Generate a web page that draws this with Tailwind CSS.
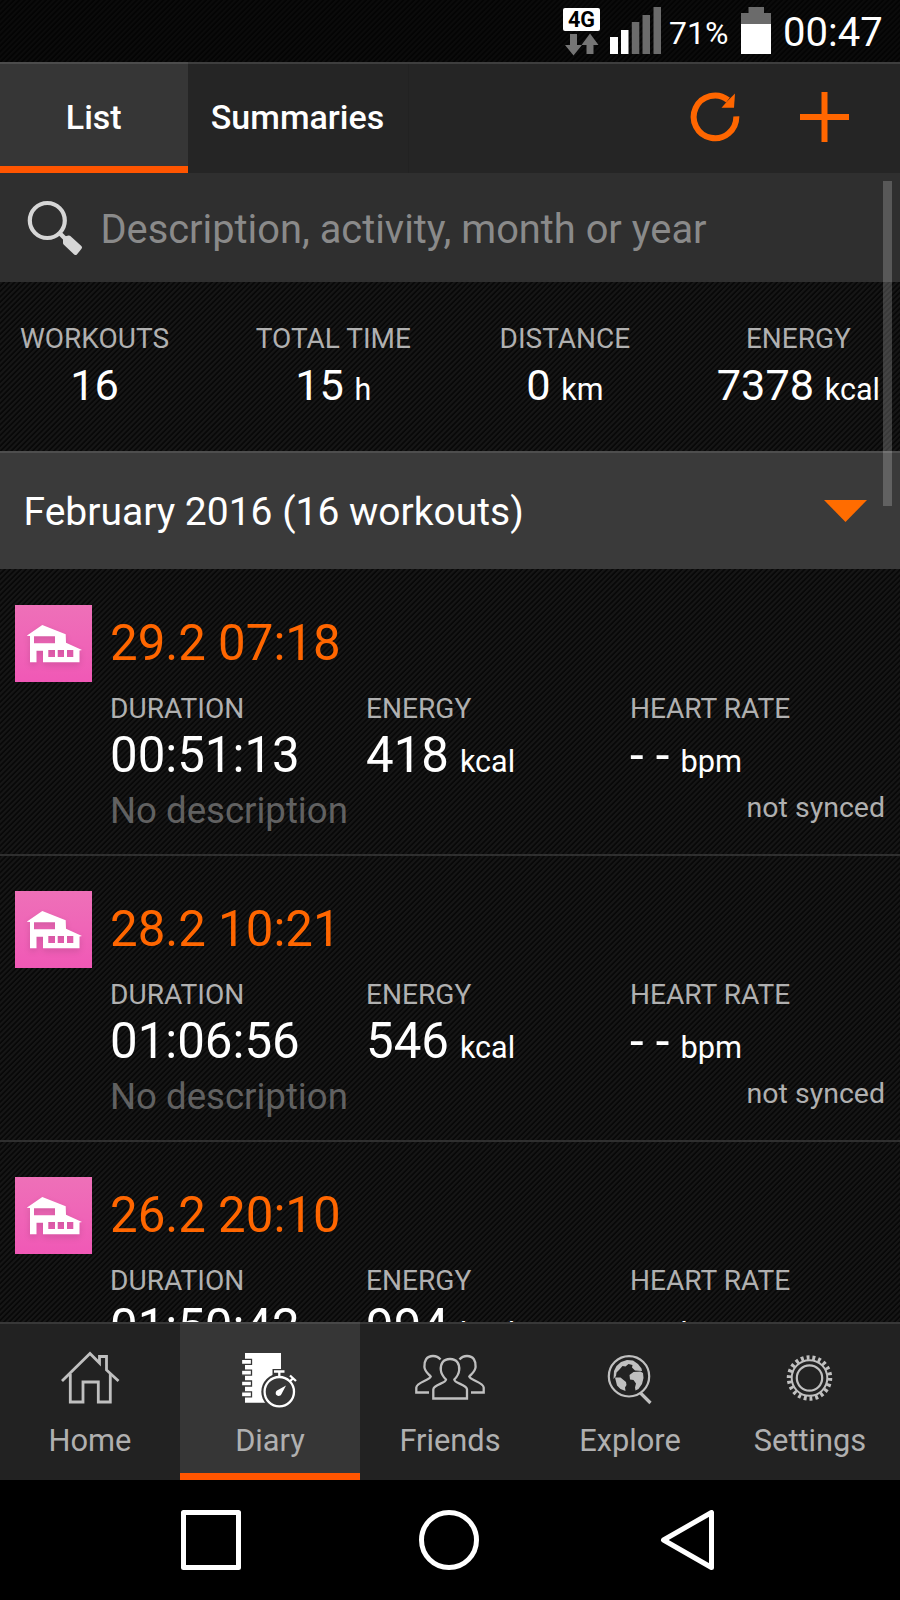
<!DOCTYPE html>
<html lang="en">
<head>
  <meta charset="UTF-8">
  <title>Diary</title>
  <script src="https://cdn.jsdelivr.net/npm/@tailwindcss/browser@4"></script>
</head>
<body class="bg-black">
  <div class="relative w-[900px] h-[1600px] overflow-hidden flex flex-col font-[Roboto,sans-serif] text-white whitespace-nowrap bg-[#0e0e0e] bg-[repeating-linear-gradient(135deg,#161616_0px,#161616_1.2px,#080808_2.2px,#080808_3.1px,#161616_3.77px)]">

    <!-- status bar -->
    <div class="h-[62px] shrink-0 flex bg-black/50 pl-[563px]">
      <svg class="w-[100px] h-[62px] shrink-0" viewBox="0 0 100 62">
        <rect x="0" y="8" width="37" height="23" rx="2" fill="#fff"/>
        <text x="18.5" y="27" text-anchor="middle" font-family="Roboto" font-weight="700" font-size="21.5" fill="#000">4G</text>
        <path d="M7 34h7v11h5l-8.500 10.500L2 45h5zM23.500 54V45h-5L27 33.500 35.500 45h-5v9z" fill="#757575"/>
        <path d="M47 37h8v17h-8zM58 30h7.500v24H58z" fill="#fff"/>
        <path d="M68.800 22h7.500v32h-7.500zM79.500 15h7.500v39h-7.500zM90.500 7h7.500v47h-7.500z" fill="#6b6b6b"/>
      </svg>
      <span class="ml-[6px] w-[62px] mt-[13px] text-[32px] leading-10">71%</span>
      <svg class="ml-[10px] w-[30px] h-[62px] shrink-0" viewBox="0 0 30 62">
        <path d="M0 24V13h7.500V7H23v6h7v11z" fill="#6b6b6b"/>
        <path d="M0 24h30v30H0z" fill="#fff"/>
      </svg>
      <span class="ml-[12px] mt-[8px] text-[40px] leading-[50px]">00:47</span>
    </div>

    <!-- top tabs -->
    <div class="h-[111px] shrink-0 flex bg-[#252525] border-t-2 border-[#3e3e3e] text-[34px] font-medium">
      <div class="w-[187.5px] -mt-[2px] border-t-2 border-t-[#4c4c4c] border-b-[7px] border-b-[#ff5500] bg-[#363636] flex items-center justify-center pt-[5px]">List</div>
      <div class="w-[221px] flex items-center justify-center border-r border-[#222222] pb-[2px]">Summaries</div>
      <svg class="ml-[281.5px] mt-[28px] size-[50px]" viewBox="0 0 50 50">
        <path d="M46.300 24.300A21.300 21.300 0 1 1 38 8" fill="none" stroke="#ff6600" stroke-width="6"/>
        <path d="M45 1.500 44 15.700H31.500L37 9.500z" fill="#ff6600"/>
      </svg>
      <svg class="ml-[60px] mt-[28px] size-[50px]" viewBox="0 0 50 50">
        <path d="M24.500 0v50M0 25h49" stroke="#ff6600" stroke-width="6"/>
      </svg>
    </div>

    <!-- search -->
    <div class="h-[109px] shrink-0 flex items-center bg-[#2f2f2f] pl-[27px]">
      <svg class="w-[58px] h-[58px]" viewBox="0 0 58 58">
        <circle cx="20.300" cy="21.500" r="17.500" fill="none" stroke="#d6d6d6" stroke-width="4.200"/>
        <path d="M31.500 33l8 8" stroke="#d6d6d6" stroke-width="4.500"/>
        <path d="M42 38.500 53 48.500 48.500 54 38 44V39.500z" fill="#d6d6d6" stroke="#d6d6d6" stroke-width="4" stroke-linejoin="round"/>
      </svg>
      <span class="ml-[15.5px] pt-[5px] text-[39.8px] text-[#8a8a8a]">Description, activity, month or year</span>
    </div>

    <!-- totals -->
    <div class="h-[169px] shrink-0 flex justify-between px-5 pt-10 text-center">
      <div>
        <div class="text-[28px] leading-[34px] text-[#b0b0b0]">WORKOUTS</div>
        <div class="mt-[5px] text-[43.3px] leading-[50px]">16</div>
      </div>
      <div>
        <div class="text-[28px] leading-[34px] text-[#b0b0b0]">TOTAL TIME</div>
        <div class="mt-[5px] text-[43.3px] leading-[50px]">15 <span class="text-[30.5px]">h</span></div>
      </div>
      <div class="pl-[2px]">
        <div class="text-[28px] leading-[34px] text-[#b0b0b0]">DISTANCE</div>
        <div class="mt-[5px] text-[43.3px] leading-[50px]">0 <span class="text-[30.5px]">km</span></div>
      </div>
      <div>
        <div class="text-[28px] leading-[34px] text-[#b0b0b0]">ENERGY</div>
        <div class="mt-[5px] text-[43.3px] leading-[50px]">7378 <span class="text-[30.5px]">kcal</span></div>
      </div>
    </div>

    <!-- month header -->
    <div class="h-[118px] shrink-0 flex items-center justify-between bg-[#3a3a3a] border-t-2 border-[#4e4e4e] pl-[23.5px] pr-[33px] text-[39px]">
      <span class="pt-[2px]">February 2016 (16 workouts)</span>
      <svg class="w-[43px] h-[22px]" viewBox="0 0 43 22"><path d="M0 0h43L21.500 22z" fill="#ff6c00"/></svg>
    </div>

    <!-- workouts -->
    <div id="workouts" class="flex-1 min-h-0 overflow-hidden pt-px"></div>

    <!-- app tabs -->
    <div class="h-[158px] shrink-0 grid grid-cols-5 bg-[#222222] text-[30.8px] text-[#b0b0b0]">
      <div class="flex flex-col items-center border-t-2 border-[#383838] pt-[22px]">
        <svg class="w-20 h-16" viewBox="0 0 80 64" fill="none" stroke="#c0c0c0" stroke-width="2.800">
          <path d="M12 35 40 7.500l9.500 9.500v-6.500h7V24L68.500 35"/>
          <path d="M20.300 28v28H33V36h15.300v20h12V28"/>
        </svg>
        <span class="mt-[9px] leading-[44px]">Home</span>
      </div>
      <div class="flex flex-col items-center border-t-2 border-t-[#484848] border-b-[7px] border-b-[#ff5500] bg-[#363636] pt-[22px]">
        <svg class="w-20 h-16" viewBox="0 0 80 64">
          <path d="M15 7h36v49.700H15z" fill="#fff"/>
          <g fill="#fff" stroke="#363636" stroke-width="1.300">
            <path d="M11.500 13.300h10v5h-10zM11.500 24.200h10v5h-10zM11.500 35h10v5h-10zM11.500 45.800h10v5h-10z"/>
          </g>
          <circle cx="49.300" cy="45.700" r="18" fill="#363636"/>
          <path d="M42.500 23h14v6h-14z" fill="#363636"/>
          <g fill="none" stroke="#fff" stroke-width="2.300">
            <circle cx="49.300" cy="45.700" r="14.700"/>
            <path d="M44 25.500h10.500M49.300 25.500V31M60 29.500l6 5.500M63 32.300l-3.500 3.500"/>
          </g>
          <path d="M56 39.500 51.500 48a3 3 0 1 1-4.500-3.500z" fill="#fff"/>
        </svg>
        <span class="mt-[9px] leading-[44px]">Diary</span>
      </div>
      <div class="flex flex-col items-center border-t-2 border-[#383838] pt-[22px]">
        <svg class="w-20 h-16" viewBox="0 0 80 64" fill="none" stroke="#c0c0c0" stroke-width="2.300">
          <path d="M40 13C33 13 30.300 18 30.800 24c.4 4.500 2.700 7 5.200 9.500 0 4-12.700 5-12.700 10v9H57v-9c0-5-12.700-6-12.700-10 2.500-2.500 4.500-5 4.900-9.500C49.700 18 47 13 40 13z"/>
          <path d="M30.500 13.500C28.500 11 26 10 23 10c-6.500 0-9 5-8.600 11 .4 4.500 3.600 6.500 6.300 9.500-1 4-14 5.500-14.400 11v5H19"/>
          <path d="M49.500 13.500C51.500 11 54 10 57 10c6.500 0 9 5 8.600 11-.4 4.500-3.600 6.500-6.300 9.500 1 4 14 5.500 14.400 11v5H61"/>
        </svg>
        <span class="mt-[9px] leading-[44px]">Friends</span>
      </div>
      <div class="flex flex-col items-center border-t-2 border-[#383838] pt-[22px]">
        <svg class="w-20 h-16" viewBox="0 0 80 64" fill="none" stroke="#c0c0c0">
          <circle cx="39" cy="30.300" r="20.200" stroke-width="2.200"/>
          <path d="M50.500 47l10 10" stroke-width="3.200"/>
          <g fill="#c0c0c0" stroke="none">
            <path d="M23.500 33 24 25l2.500-5 4.500-4 6-2 6 .500 5 3.500 3.500 4.500.500 2.500-7-.5-3-3 .500-2.500-4-1-3 2.500-3-.5L29 24l-2.500 2.500L26 30z"/>
            <path d="M39.500 29l4-3 7-.5 2.500 1.500.500 5-1.500 6-3.500 5-3 1.500-.5-3 1-4-2.500-3.500-3.500-.5z"/>
            <path d="M25 31.500h5.500l5.500 4.500.500 3-1.500 2.500.500 3.500-5-2-3.500-3.500z"/>
          </g>
        </svg>
        <span class="mt-[9px] leading-[44px]">Explore</span>
      </div>
      <div class="flex flex-col items-center border-t-2 border-[#383838] pt-[22px]">
        <svg class="w-20 h-16" viewBox="0 0 80 64" fill="none" stroke="#c0c0c0">
          <circle cx="39.500" cy="32" r="12.700" stroke-width="2.200"/>
          <circle cx="39.500" cy="32" r="17.800" stroke-width="2"/>
          <circle cx="39.500" cy="32" r="20.500" stroke-width="4.500" pathLength="44" stroke-dasharray="1 1"/>
        </svg>
        <span class="mt-[9px] leading-[44px]">Settings</span>
      </div>
    </div>

    <!-- system navigation -->
    <div class="h-[120px] shrink-0 flex items-center justify-between bg-black pl-[181px] pr-[184px]">
      <svg class="size-[60px]" viewBox="0 0 60 60" fill="none" stroke="#fff" stroke-width="5" stroke-linejoin="round"><path d="M2.500 2.500h55v55h-55z"/></svg>
      <svg class="size-[60px]" viewBox="0 0 60 60" fill="none" stroke="#fff" stroke-width="5"><circle cx="30" cy="30" r="27.500"/></svg>
      <svg class="size-[60px]" viewBox="0 0 60 60" fill="none" stroke="#fff" stroke-width="5" stroke-linejoin="round"><path d="M55.500 2.500v55L7.500 30z"/></svg>
    </div>

    <!-- scrollbar -->
    <div class="absolute left-[883px] top-[181px] w-[9px] h-[325px] bg-white/20"></div>
  </div>

  <script>
    const workouts = [
      { date: "29.2 07:18", duration: "00:51:13", energy: "418" },
      { date: "28.2 10:21", duration: "01:06:56", energy: "546" },
      { date: "26.2 20:10", duration: "01:50:42", energy: "994" }
    ];
    document.getElementById("workouts").innerHTML = workouts.map(w => `
      <div class="h-[286px] flex pl-[15px] pr-[15px] border-b-2 border-[#2f2f2f]">
        <svg class="mt-[35px] size-[77px] shrink-0 bg-linear-to-b from-[#ee70b8] to-[#f058b6]" viewBox="0 0 77 77">
          <path class="drop-shadow-md" fill="#fff" fill-rule="evenodd" d="M11.700 30.700 27.300 20l23.400 9.300.3 8.400L67 45l-2.500.5v11.800H28V45.700h-6.500v11.600H15V31zM19 31.300h21v7H19zM33.300 45H40v7h-6.700zM42.700 45H49v7h-6.300zM52 45h6.300v7H52z"/>
        </svg>
        <div class="flex-1 ml-[18px] pt-[43px]">
          <div class="text-[49.2px] leading-[60px] text-[#ff6600]">${w.date}</div>
          <div class="mt-[19px] grid grid-cols-[256px_264px_auto]">
            <div>
              <div class="text-[28.1px] leading-[34px] text-[#b0b0b0]">DURATION</div>
              <div class="mt-[2px] text-[49.2px] leading-[54px]">${w.duration}</div>
            </div>
            <div>
              <div class="text-[28.1px] leading-[34px] text-[#b0b0b0]">ENERGY</div>
              <div class="mt-[2px] text-[49.2px] leading-[54px]">${w.energy}<span class="ml-[11px] text-[30.5px]">kcal</span></div>
            </div>
            <div>
              <div class="text-[28.1px] leading-[34px] text-[#b0b0b0]">HEART RATE</div>
              <div class="mt-[2px] text-[49.2px] leading-[54px]">- -<span class="ml-[11px] text-[30.8px]">bpm</span></div>
            </div>
          </div>
          <div class="mt-[2px] flex justify-between">
            <span class="text-[36.6px] leading-10 text-[#616161]">No description</span>
            <span class="text-[28.5px] leading-[34px] text-[#b0b0b0]">not synced</span>
          </div>
        </div>
      </div>`).join("");
  </script>
</body>
</html>
